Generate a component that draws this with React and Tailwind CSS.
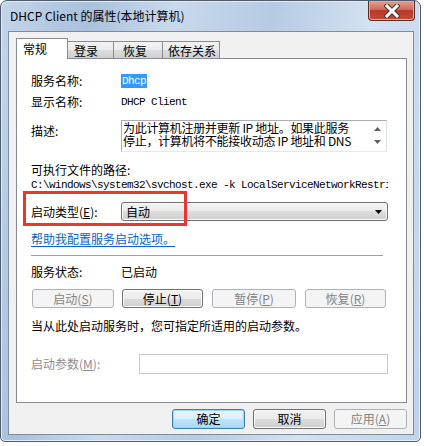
import React from 'react';

const font = "font-['Microsoft_YaHei','Noto_Sans_CJK_SC',sans-serif]";
const mono = "font-['Liberation_Mono','Noto_Sans_CJK_SC',monospace] text-[11px] tracking-[-0.6px]";

const btn =
  'flex items-center justify-center rounded-[3px] border border-[#707070] bg-[linear-gradient(#f2f2f2,#ebebeb_50%,#dddddd_50%,#cfcfcf)] shadow-[inset_0_0_0_1px_#fbfbfb] text-black';
const btnOff =
  'flex items-center justify-center rounded-[3px] border border-[#adb2b5] bg-[#f4f4f4] text-[#838383]';

const Key = ({ k }) => (
  <span>
    (<span className="underline">{k}</span>)
  </span>
);

const CloseButton = () => (
  <div className="ml-auto mr-[5px] w-[47px] h-[20px] rounded-b-[4px] border border-t-0 border-[#5a2a27] bg-[linear-gradient(#e0a193,#cf6b5c_45%,#b83a2a_50%,#c24b38)] shadow-[inset_0_0_0_1px_#e8a99c] flex items-center justify-center">
    <svg width="16" height="14" viewBox="0 0 16 14">
      <path d="M3 2 L13 12 M13 2 L3 12" stroke="#3b3b3b" strokeWidth="5" strokeLinecap="square" />
      <path d="M3 2 L13 12 M13 2 L3 12" stroke="#ffffff" strokeWidth="3" strokeLinecap="square" />
    </svg>
  </div>
);

const Tabs = () => (
  <div className="flex items-end h-[20px]">
    <div className="relative z-10 -mb-px w-[52px] h-[21px] border border-b-0 border-[#898c95] bg-white pl-[6px] leading-[19px]">
      常规
    </div>
    <div className="-ml-px w-[47px] h-[17px] border border-b-0 border-[#898c95] bg-[linear-gradient(#f2f2f2,#ebebeb_50%,#dddddd_50%,#cfcfcf)] pl-[6px] leading-[17px]">
      登录
    </div>
    <div className="-ml-px w-[50px] h-[17px] border border-b-0 border-[#898c95] bg-[linear-gradient(#f2f2f2,#ebebeb_50%,#dddddd_50%,#cfcfcf)] pl-[9px] leading-[17px]">
      恢复
    </div>
    <div className="-ml-px w-[58px] h-[17px] border border-b-0 border-[#898c95] bg-[linear-gradient(#f2f2f2,#ebebeb_50%,#dddddd_50%,#cfcfcf)] pl-[5px] leading-[17px]">
      依存关系
    </div>
  </div>
);

const General = () => (
  <div className="h-[345px] border border-[#898c95] bg-white pl-[14px] flex flex-col">
    <div className="mt-[14px] h-[16px] flex items-center">
      <div className="w-[90px]">服务名称:</div>
      <span className={`${mono} bg-[#3399ff] text-white px-px leading-[14px]`}>Dhcp</span>
    </div>
    <div className="mt-[5px] h-[16px] flex items-center">
      <div className="w-[90px]">显示名称:</div>
      <span className={mono}>DHCP Client</span>
    </div>
    <div className="mt-[10px] h-[32px] flex">
      <div className="w-[90px] pt-[3px] leading-[16px]">描述:</div>
      <div className="w-[266px] h-[32px] border border-[#abadb3] border-r-[#dbdfe6] border-b-[#e3e9ef] flex">
        <div className="flex-1 pl-[1px] text-[12px] leading-[13px] tracking-[-0.3px] overflow-hidden">
          <div className="whitespace-nowrap">为此计算机注册并更新 IP 地址。如果此服务</div>
          <div className="whitespace-nowrap">停止，计算机将不能接收动态 IP 地址和 DNS</div>
        </div>
        <div className="w-[17px] flex flex-col items-center justify-center gap-[9px] pb-[1px]">
          <svg width="7" height="4" viewBox="0 0 7 4"><path d="M0 4 L3.5 0 L7 4 Z" fill="#606060" /></svg>
          <svg width="7" height="4" viewBox="0 0 7 4"><path d="M0 0 L3.5 4 L7 0 Z" fill="#606060" /></svg>
        </div>
      </div>
    </div>
    <div className="mt-[11px] h-[14px] leading-[14px]">可执行文件的路径:</div>
    <div className={`mt-[1px] h-[14px] w-[357px] overflow-hidden whitespace-nowrap leading-[14px] ${mono}`}>
      C:\windows\system32\svchost.exe -k LocalServiceNetworkRestricted
    </div>
    <div className="relative mt-[10px] h-[19px] flex items-center">
      <div className="w-[90px]">
        启动类型<Key k="E" />:
      </div>
      <div className="w-[267px] h-[19px] rounded-[3px] border border-[#707070] bg-[linear-gradient(#f2f2f2,#ebebeb_50%,#dddddd_50%,#cfcfcf)] shadow-[inset_0_0_0_1px_#fbfbfb] flex items-center pl-[4px] pr-[5px]">
        <span className="leading-[16px]">自动</span>
        <svg className="ml-auto" width="7" height="4" viewBox="0 0 7 4"><path d="M0 0 L7 0 L3.5 4 Z" fill="#000" /></svg>
      </div>
      <div className="absolute left-[-8px] top-[-11px] w-[164px] h-[35px] border-[3px] border-[#ea3535]" />
    </div>
    <div className="mt-[10px] h-[16px] leading-[16px] text-[#0066cc] underline underline-offset-[2px]">
      帮助我配置服务启动选项。
    </div>
    <div className="mt-[8px] h-px w-[352px] bg-[#a0a0a0]" />
    <div className="mt-[8px] h-[16px] flex items-center">
      <div className="w-[90px]">服务状态:</div>
      <span>已启动</span>
    </div>
    <div className="mt-[9px] h-[19px] flex">
      <div className={`${btnOff} ml-px w-[82px]`}>启动<Key k="S" /></div>
      <div className={`${btn} ml-[8px] w-[81px]`}>停止<Key k="T" /></div>
      <div className={`${btnOff} ml-[9px] w-[84px]`}>暂停<Key k="P" /></div>
      <div className={`${btnOff} ml-[9px] w-[81px]`}>恢复<Key k="R" /></div>
    </div>
    <div className="mt-[10px] h-[16px] leading-[16px]">当从此处启动服务时，您可指定所适用的启动参数。</div>
    <div className="mt-[20px] h-[20px] flex items-center">
      <div className="w-[108px] text-[#8d8d8d]">
        启动参数<Key k="M" />:
      </div>
      <div className="w-[249px] h-[20px] border border-[#c6c8cc] bg-white" />
    </div>
  </div>
);

export default function App() {
  return (
    <div className={`w-[424px] h-[446px] bg-white text-[12px] text-black ${font}`}>
      <div className="w-[421px] h-[442px] rounded-t-[7px] rounded-b-[5px] border border-[#4d5b6c] bg-[linear-gradient(100deg,#c3d5ea,#a9c1dd_18%,#c9d9ec_35%,#b6cae3_55%,#d3e1f0_75%,#c0d3e9)] shadow-[inset_0_0_0_1px_#e4edf7] flex flex-col">
        <div className="h-[30px] flex items-start">
          <div className="pl-[9px] pt-[6px] leading-[18px] text-[12px] text-black">DHCP Client 的属性(本地计算机)</div>
          <CloseButton />
        </div>
        <div className="ml-[7px] mr-[6px] mb-[6px] flex-1 border border-[#7b8da3] bg-[#f0f0f0] flex flex-col pl-[7px] pr-[6px] pt-[6px]">
          <Tabs />
          <General />
          <div className="mt-[6px] h-[20px] flex justify-end">
            <div className="w-[73px] flex items-center justify-center rounded-[3px] border border-[#3c7fb1] bg-[linear-gradient(#eaf6fd,#d9f0fc_50%,#bee6fd_50%,#a7d9f5)] shadow-[inset_0_0_0_1px_#9ad6f6]">确定</div>
            <div className={`${btn} ml-[8px] w-[73px]`}>取消</div>
            <div className={`${btnOff} ml-[8px] w-[73px]`}>应用<Key k="A" /></div>
          </div>
        </div>
      </div>
    </div>
  );
}
